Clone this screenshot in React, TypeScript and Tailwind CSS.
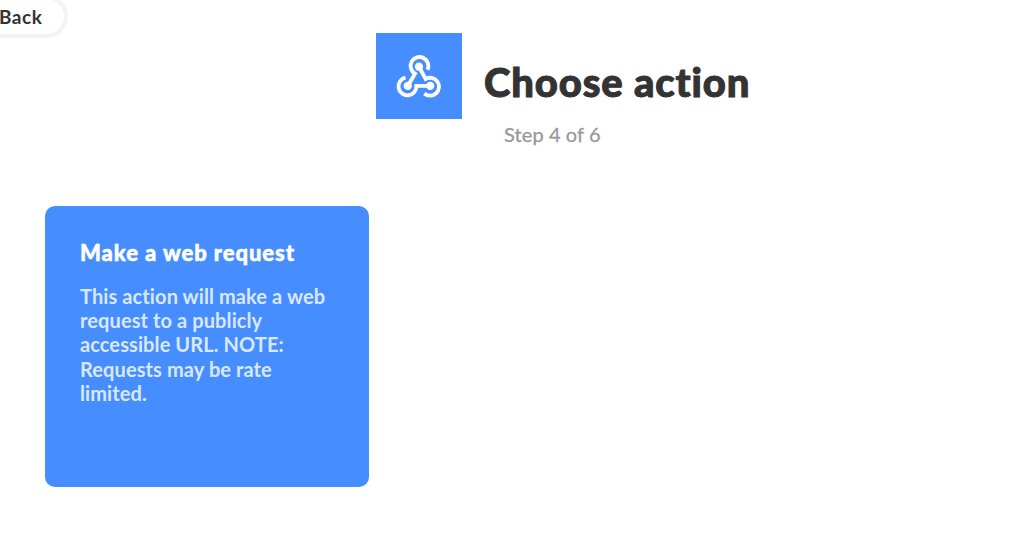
function WebhookIcon() {
  return (
    <svg
      viewBox="0 0 260 260"
      className="size-full"
      fill="none"
      stroke="white"
      strokeWidth="11.500"
      aria-hidden="true"
    >
      <path d="M96 160 L118 123 A27 27 0 1 1 156 111" />
      <path d="M130 102 L150 139 A27 27 0 1 1 146 183" />
      <path d="M164 160 L122 160 A27 27 0 1 1 89 135" />
      <g fill="white" stroke="none">
        <circle cx="130" cy="102" r="12.500" />
        <circle cx="96" cy="160" r="12.500" />
        <circle cx="164" cy="160" r="12.500" />
      </g>
    </svg>
  )
}

function ActionCard({ title, lines }: { title: string; lines: string[] }) {
  return (
    <button className="mt-[56px] ml-[45px] flex h-[281px] w-[324px] flex-col rounded-[10px] bg-[#468eff] px-[35px] pt-[33px] text-left">
      <h2 className="text-[22px] leading-[27px] font-black tracking-[0.92px] whitespace-nowrap text-white [-webkit-text-stroke:0.5px_white]">
        {title}
      </h2>
      <p className="mt-[18px] text-[20px] leading-[24.200px] font-bold tracking-[0.1px] whitespace-nowrap text-[#dae8ff]">
        {lines.map((line) => (
          <span key={line} className="block">
            {line}
          </span>
        ))}
      </p>
    </button>
  )
}

export default function App() {
  return (
    <main className="h-[556px] w-full overflow-hidden bg-white font-['Lato',sans-serif] [font-variant-ligatures:none]">
      <div className="flex h-[33px]">
        <button className="-mt-[5px] -ml-[40px] flex h-[43px] w-[108px] shrink-0 items-center rounded-full border-4 border-[#f3f3f3] pt-[2px] pl-[35px] text-[19px] font-bold tracking-[0.5px] text-[#333333]">
          Back
        </button>
      </div>
      <header className="flex h-[117px]">
        <div className="ml-[376px] size-[86px] shrink-0 bg-[#468eff]">
          <WebhookIcon />
        </div>
        <div className="ml-[22px] pt-[25px] whitespace-nowrap">
          <h1 className="text-[40px] leading-[48px] font-black tracking-[0.87px] text-[#333333] [-webkit-text-stroke:1px_#333333]">
            Choose action
          </h1>
          <p className="mt-[16px] ml-[20px] text-[20px] leading-[24px] tracking-[0.1px] text-[#999999] [-webkit-text-stroke:0.3px_#999999]">
            Step 4 of 6
          </p>
        </div>
      </header>
      <ActionCard
        title="Make a web request"
        lines={[
          'This action will make a web',
          'request to a publicly',
          'accessible URL. NOTE:',
          'Requests may be rate',
          'limited.',
        ]}
      />
    </main>
  )
}
